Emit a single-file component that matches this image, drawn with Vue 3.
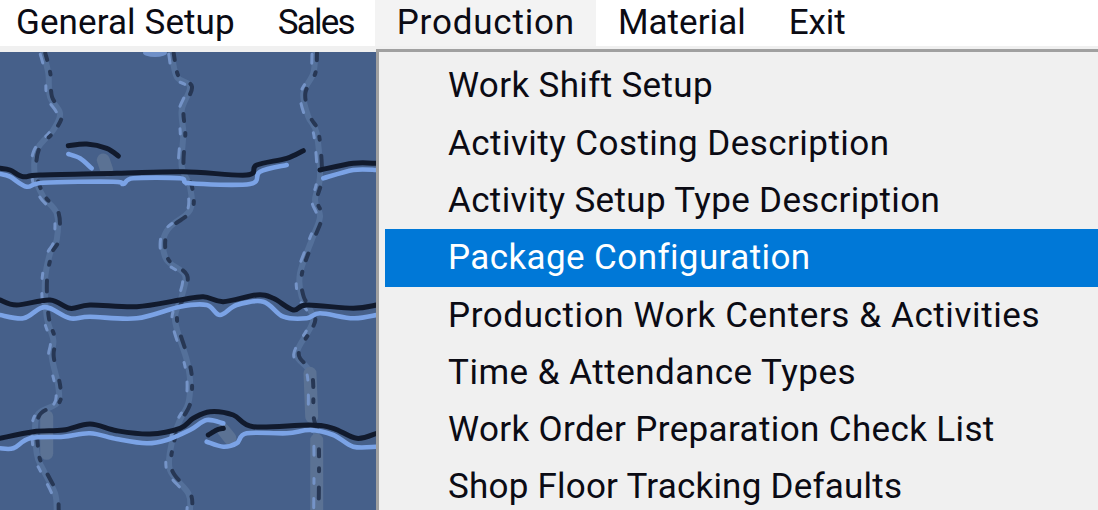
<script setup>
const menus = [
  { label: 'General Setup', track: 0.1 },
  { label: 'Sales', track: -1.8 },
  { label: 'Production', track: 0.8 },
  { label: 'Material', track: 0.05 },
  { label: 'Exit', track: -0.1 }
]
const items = [
  { label: 'Work Shift Setup', track: 0.35 },
  { label: 'Activity Costing Description', track: 0.45 },
  { label: 'Activity Setup Type Description', track: 0.35 },
  { label: 'Package Configuration', track: 0.4 },
  { label: 'Production Work Centers & Activities', track: 0.6 },
  { label: 'Time & Attendance Types', track: 0.5 },
  { label: 'Work Order Preparation Check List', track: 0.37 },
  { label: 'Shop Floor Tracking Defaults', track: 0.22 }
]
// Points are read from the 3x zoom; yo is the crop's offset, body offset is 52.
const conv = (pts, yo = 0) => pts.map(([x, y]) => [x / 3, yo + y / 3 - 52])
const smooth = (p) => {
  let d = `M${p[0][0].toFixed(1)} ${p[0][1].toFixed(1)}`
  for (let i = 0; i < p.length - 1; i++) {
    const a = p[i - 1] || p[i], b = p[i], c = p[i + 1], e = p[i + 2] || c
    const c1 = [b[0] + (c[0] - a[0]) / 6, b[1] + (c[1] - a[1]) / 6]
    const c2 = [c[0] - (e[0] - b[0]) / 6, c[1] - (e[1] - b[1]) / 6]
    d += `C${c1[0].toFixed(1)} ${c1[1].toFixed(1)} ${c2[0].toFixed(1)} ${c2[1].toFixed(1)} ${c[0].toFixed(1)} ${c[1].toFixed(1)}`
  }
  return d
}
const line = (a, b = [], off = 240) => smooth([...conv(a), ...conv(b, off)])

const darks = [
  line([[0,505],[30,510],[70,530],[120,525],[350,520],[550,515],[740,525],[770,495],[860,475],[910,452]]),
  line([[960,510],[1060,490],[1130,490]]),
  line([[205,437],[260,432],[320,445],[355,468]]),
  smooth(conv([[0,180],[50,195],[150,180],[210,205],[270,195],[410,200],[540,180],[610,170],[670,185],[770,165],[820,175],[880,210],[920,195],[1060,205],[1130,195]], 240)),
  smooth(conv([[0,595],[100,575],[190,570],[270,552],[350,572],[450,582],[540,565],[580,535],[630,515],[700,525],[760,560],[930,555],[1000,565],[1070,595],[1130,580]], 240)),
  smooth(conv([[625,585],[650,570],[670,565]], 240))
]
const lights = [
  line([[0,522],[30,530],[80,560],[130,548],[340,545],[370,552],[400,535],[540,535],[570,550],[750,552],[780,515],[860,495]]),
  line([[970,535],[1060,510],[1130,510]]),
  line([[205,462],[240,475],[275,505]]),
  smooth(conv([[0,225],[70,235],[120,205],[150,205],[210,235],[270,230],[410,235],[540,200],[620,195],[660,225],[710,195],[790,185],[850,230],[920,235],[960,220],[1060,235],[1130,225]], 240)),
  smooth(conv([[0,625],[40,625],[90,595],[190,590],[270,580],[350,597],[440,610],[500,600],[570,570],[620,540],[670,550]], 240)),
  smooth(conv([[620,605],[670,620],[710,610],[740,580],[860,580],[930,570],[1000,585],[1060,620],[1130,620]], 240))
]
const verticals = [
  line([[130,160],[145,220],[150,290],[180,340],[160,390],[110,450],[105,530],[130,590],[170,640],[170,720]], [[150,40],[135,120],[140,230],[160,300],[155,350],[175,440],[170,490],[110,530],[110,640],[130,690],[165,760],[170,810]]),
  line([[515,160],[530,230],[570,260],[545,330],[550,400],[545,500],[570,560],[570,630],[510,680],[490,720]], [[500,60],[555,105],[545,170],[525,240],[560,360],[570,420],[565,490],[540,540],[515,610],[510,690],[565,760],[570,810]]),
  line([[945,160],[940,220],[910,280],[925,350],[950,400],[960,530],[945,600],[960,650],[935,720]], [[900,100],[905,170],[940,240],[890,340],[930,400],[935,530],[950,600],[950,810]])
]
const blobs = [
  smooth(conv([[310,480],[320,510]])),
  smooth(conv([[670,570],[690,595]], 240)),
  smooth(conv([[140,530],[140,640]], 240)),
  smooth(conv([[930,400],[935,530]], 240)),
  smooth(conv([[950,600],[950,810]], 240))
]
</script>

<template>
  <div class="screen">
    <nav class="menubar">
      <span
        v-for="m in menus"
        :key="m.label"
        class="top"
        :class="{ open: m.label === 'Production' }"
        :style="{ letterSpacing: m.track + 'px' }"
      >{{ m.label }}</span>
    </nav>
    <div class="strip"></div>
    <svg class="desktop" viewBox="0 0 376 458" preserveAspectRatio="none" aria-hidden="true">
      <rect width="376" height="458" fill="#46608a" />
      <ellipse cx="155" cy="1" rx="12" ry="4" fill="#6f90c8" />
      <g fill="none" stroke-linecap="round" stroke-linejoin="round">
        <path v-for="(d, i) in verticals" :key="'v' + i" :d="d" stroke="#54709a" stroke-width="6" />
        <path v-for="(d, i) in blobs" :key="'o' + i" :d="d" stroke="#5b7294" stroke-width="13" />
        <path v-for="(d, i) in verticals" :key="'l' + i" :d="d" stroke="#7594c8" stroke-width="3" stroke-dasharray="9 23 5 15" transform="translate(-3 1)" />
        <path v-for="(d, i) in verticals" :key="'k' + i" :d="d" stroke="#273754" stroke-width="4" stroke-dasharray="7 12 3 16 11 21" transform="translate(2 0)" />
        <path v-for="(d, i) in lights" :key="'b' + i" :d="d" stroke="#7ba3e6" stroke-width="4.6" />
        <path v-for="(d, i) in darks" :key="'d' + i" :d="d" stroke="#111a2d" stroke-width="5" />
      </g>
    </svg>
    <ul class="popup">
      <li
        v-for="it in items"
        :key="it.label"
        class="entry"
        :class="{ active: it.label === 'Package Configuration' }"
        :style="{ letterSpacing: it.track + 'px' }"
      >{{ it.label }}</li>
    </ul>
  </div>
</template>

<style>
html, body { margin: 0; background: #f0f0f0; }
</style>

<style scoped>
.screen {
  position: relative;
  width: 1098px;
  height: 510px;
  overflow: hidden;
  display: flex;
  flex-direction: column;
  background: #f0f0f0;
  font-family: Roboto, "Noto Sans", sans-serif;
  font-size: 35px;
  color: #0b0b14;
}
.menubar {
  display: flex;
  height: 46px;
  flex: none;
  background: #fff;
}
.top {
  padding: 0 21px 0 22px;
  height: 46px;
  line-height: 46px;
  white-space: nowrap;
}
.top:first-child { padding-left: 16px; }
.top.open { background: #f3f3f3; }
.strip { height: 6px; flex: none; background: #f0f0f0; }
.desktop { display: block; width: 376px; height: 458px; flex: none; }
.popup {
  position: absolute;
  left: 376px;
  top: 49px;
  right: -40px;
  margin: 0;
  padding: 5.4px 0 0 6px;
  list-style: none;
  background: #f0f0f0;
  border: 3px solid #a0a0a0;
  height: 520px;
}
.entry {
  height: 57.3px;
  line-height: 57px;
  padding-left: 63px;
  white-space: nowrap;
}
.entry.active { background: #0078d7; color: #fff; }
</style>
